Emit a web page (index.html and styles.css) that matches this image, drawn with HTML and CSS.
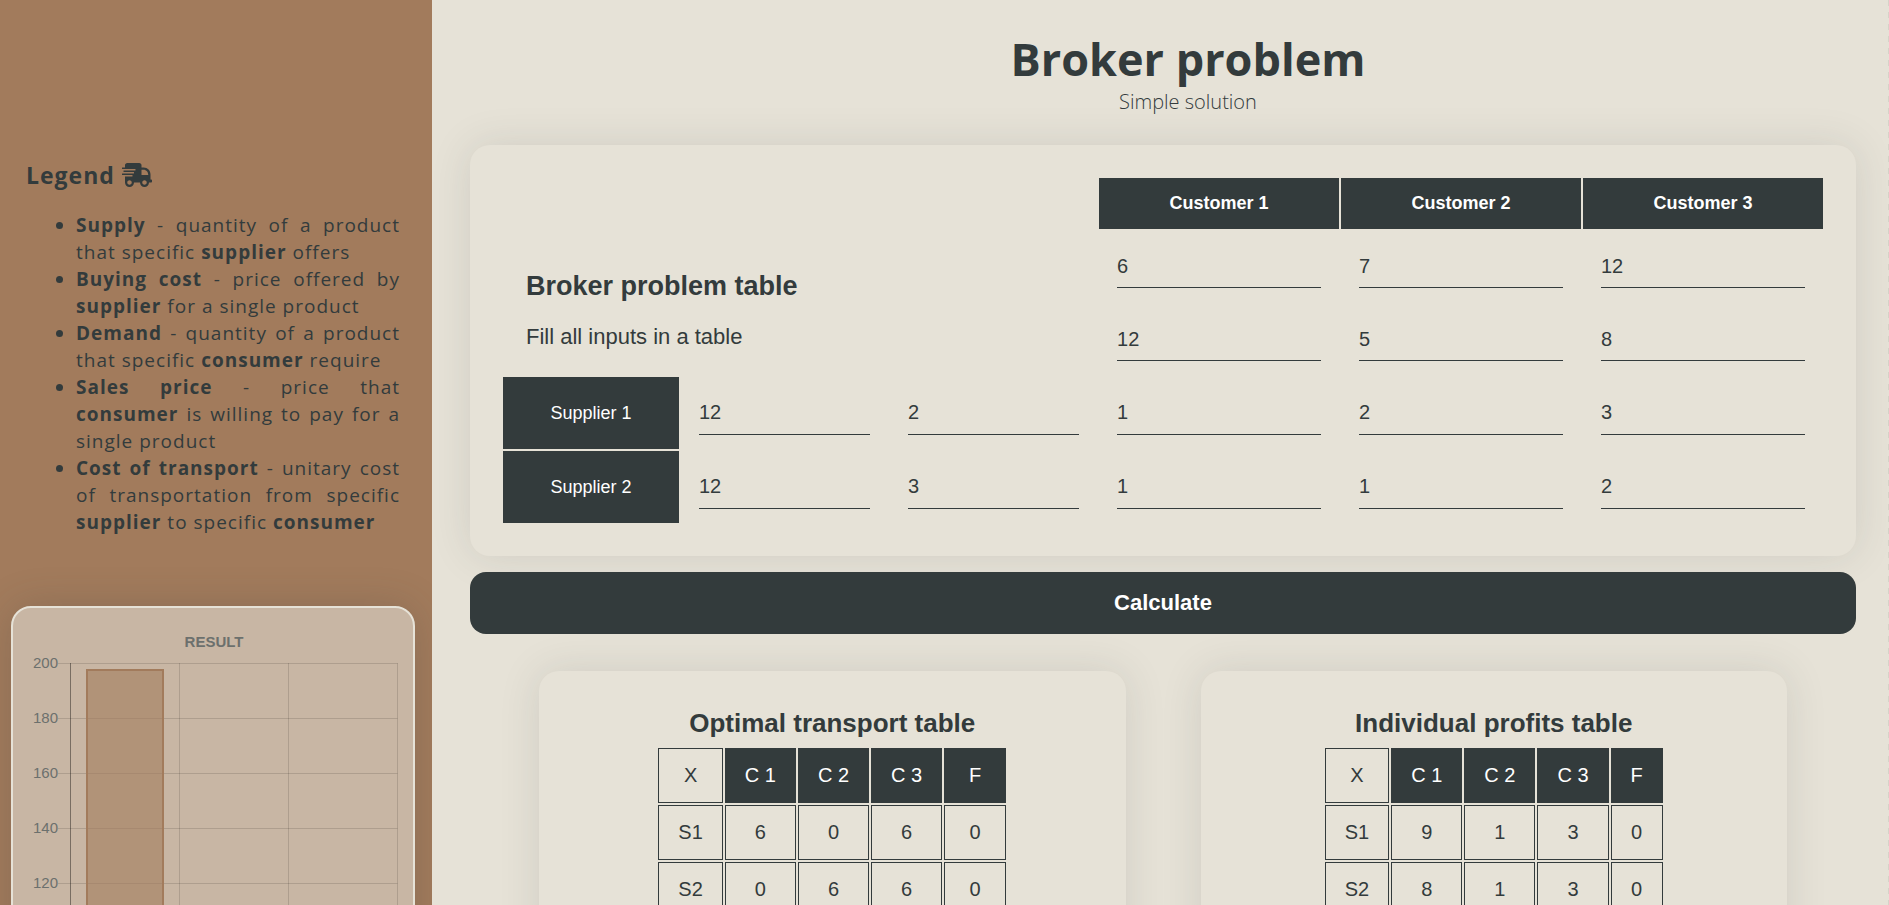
FILE: index.html
```html
<!DOCTYPE html>
<html lang="en">
<head>
<meta charset="utf-8">
<title>Broker problem</title>
<link rel="stylesheet" href="styles.css">
</head>
<body>
<aside class="sidebar">
  <section class="legend">
    <h2 class="legend-title">Legend
      <svg class="truck" viewBox="0 0 640 512" aria-hidden="true">
        <path fill="currentColor" d="M624 352h-16V243.900c0-80-60-147.900-147.900-147.900H416V48c0-26.500-21.500-48-48-48H112C85.500 0 64 21.500 64 48v48H8c-4.400 0-8 3.600-8 8v16c0 4.400 3.600 8 8 8h272c4.400 0 8 3.600 8 8v16c0 4.400-3.600 8-8 8H40c-4.400 0-8 3.600-8 8v16c0 4.400 3.600 8 8 8h208c4.400 0 8 3.600 8 8v16c0 4.400-3.600 8-8 8H8c-4.400 0-8 3.600-8 8v16c0 4.400 3.600 8 8 8h208c4.400 0 8 3.600 8 8v16c0 4.400-3.600 8-8 8H64v128c0 53 43 96 96 96s96-43 96-96h128c0 53 43 96 96 96s96-43 96-96h48c8.800 0 16-7.200 16-16v-32c0-8.800-7.200-16-16-16zM160 464c-26.500 0-48-21.500-48-48s21.500-48 48-48 48 21.500 48 48-21.500 48-48 48zm320 0c-26.500 0-48-21.500-48-48s21.500-48 48-48 48 21.500 48 48-21.500 48-48 48zm80-208H416V144h44.100c60 0 99.900 50 99.900 112z"/>
      </svg>
    </h2>
    <ul class="legend-list">
      <li><b>Supply</b> - quantity of a product that specific <b>supplier</b> offers</li>
      <li><b>Buying cost</b> - price offered by <b>supplier</b> for a single product</li>
      <li><b>Demand</b> - quantity of a product that specific <b>consumer</b> require</li>
      <li><b>Sales price</b> - price that <b>consumer</b> is willing to pay for a single product</li>
      <li><b>Cost of transport</b> - unitary cost of transportation from specific <b>supplier</b> to specific <b>consumer</b></li>
    </ul>
  </section>
  <section class="chart-card">
    <svg class="chart" viewBox="0 0 400 420" role="img" aria-label="Result chart">
      <text class="chart-title" x="201" y="39">RESULT</text>
      <g class="chart-labels">
        <text x="45" y="60">200</text>
        <text x="45" y="115">180</text>
        <text x="45" y="170">160</text>
        <text x="45" y="225">140</text>
        <text x="45" y="280">120</text>
      </g>
      <path class="grid-line" d="M45 55.500H384.500M45 110.500H384.500M45 165.500H384.500M45 220.500H384.500M45 275.500H384.500M166.500 55V420M275.500 55V420M384.500 55V420"/>
      <path class="axis-line" d="M57.500 55V420"/>
      <path class="bar" d="M74 420V62H150V420"/>
    </svg>
  </section>
</aside>
<main class="main">
  <header class="page-header">
    <h1 class="page-title">Broker problem</h1>
    <p class="page-subtitle">Simple solution</p>
  </header>
  <form class="form" onsubmit="return false">
    <div class="card">
      <table class="inputs">
        <colgroup><col class="col-supplier"><col class="col-side"><col class="col-side"><col><col><col></colgroup>
        <tr class="head-row">
          <td class="intro" colspan="3" rowspan="3">
            <h2 class="intro-title">Broker problem table</h2>
            <p class="intro-text">Fill all inputs in a table</p>
          </td>
          <th scope="col">Customer 1</th><th scope="col">Customer 2</th><th scope="col">Customer 3</th>
        </tr>
        <tr>
          <td><input aria-label="Demand 1" value="6"></td>
          <td><input aria-label="Demand 2" value="7"></td>
          <td><input aria-label="Demand 3" value="12"></td>
        </tr>
        <tr>
          <td><input aria-label="Sales price 1" value="12"></td>
          <td><input aria-label="Sales price 2" value="5"></td>
          <td><input aria-label="Sales price 3" value="8"></td>
        </tr>
        <tr>
          <th class="supplier" scope="row">Supplier 1</th>
          <td><input aria-label="Supply 1" value="12"></td>
          <td><input aria-label="Buying cost 1" value="2"></td>
          <td><input aria-label="Transport cost 1 to 1" value="1"></td>
          <td><input aria-label="Transport cost 1 to 2" value="2"></td>
          <td><input aria-label="Transport cost 1 to 3" value="3"></td>
        </tr>
        <tr>
          <th class="supplier" scope="row">Supplier 2</th>
          <td><input aria-label="Supply 2" value="12"></td>
          <td><input aria-label="Buying cost 2" value="3"></td>
          <td><input aria-label="Transport cost 2 to 1" value="1"></td>
          <td><input aria-label="Transport cost 2 to 2" value="1"></td>
          <td><input aria-label="Transport cost 2 to 3" value="2"></td>
        </tr>
      </table>
    </div>
    <button class="calculate" type="submit">Calculate</button>
  </form>
  <div class="results">
    <section class="card result-card">
      <h2 class="result-title">Optimal transport table</h2>
      <table class="result-table wide-last">
        <tr><td>X</td><th scope="col">C 1</th><th scope="col">C 2</th><th scope="col">C 3</th><th scope="col">F</th></tr>
        <tr><td>S1</td><td>6</td><td>0</td><td>6</td><td>0</td></tr>
        <tr><td>S2</td><td>0</td><td>6</td><td>6</td><td>0</td></tr>
      </table>
    </section>
    <section class="card result-card">
      <h2 class="result-title">Individual profits table</h2>
      <table class="result-table">
        <tr><td>X</td><th scope="col">C 1</th><th scope="col">C 2</th><th scope="col">C 3</th><th scope="col">F</th></tr>
        <tr><td>S1</td><td>9</td><td>1</td><td>3</td><td>0</td></tr>
        <tr><td>S2</td><td>8</td><td>1</td><td>3</td><td>0</td></tr>
      </table>
    </section>
  </div>
</main>
</body>
</html>
```
FILE: styles.css
```css
:root {
  --dark: #333b3c;
  --paper: #e6e2d7;
  --brown: #a27b5c;
}
* { box-sizing: border-box; }
body {
  margin: 0;
  height: 100vh;
  overflow: hidden;
  display: flex;
  background: var(--paper);
  color: var(--dark);
  font-family: "Liberation Sans", Arial, sans-serif;
}
h1, h2, p { margin: 0; }

.sidebar {
  flex: 0 0 432px;
  display: flex;
  flex-direction: column;
  gap: 70px;
  padding: 158px 17px 0 11px;
  overflow: hidden;
  background: var(--brown);
}
.legend {
  padding: 0 15px;
  font-family: "Open Sans", "Noto Sans", sans-serif;
  letter-spacing: 1px;
}
.legend-title {
  display: flex;
  align-items: center;
  gap: 7px;
  font-size: 23px;
  line-height: 34px;
}
.truck { width: 30px; height: 24px; }
.legend-list {
  margin: 20px 0 0;
  padding-left: 50px;
  font-size: 19px;
  line-height: 27px;
  text-align: justify;
}
.chart-card {
  flex: none;
  border: 2px solid var(--paper);
  border-radius: 20px;
  background: #c8b6a4;
  box-shadow: 0 0 40px rgba(51, 59, 60, 0.2);
}
.chart { display: block; width: 100%; }
.chart text { fill: #6c706d; font-size: 15px; }
.chart .chart-title { font-weight: bold; text-anchor: middle; }
.chart-labels { text-anchor: end; }
.grid-line { fill: none; stroke: rgba(0, 0, 0, 0.13); }
.axis-line { stroke: rgba(0, 0, 0, 0.4); }
.bar { fill: rgba(162, 123, 92, 0.6); stroke: var(--brown); stroke-width: 2; }

.main {
  flex: 1;
  min-width: 0;
  padding: 27px 33px 0 38px;
  background: repeating-linear-gradient(#d6d3c8 0 6px, transparent 6px 12px) right top / 1px 100% no-repeat;
}
.page-header { padding-left: 50px; text-align: center; font-family: "Open Sans", "Noto Sans", sans-serif; }
.page-title { font-size: 45px; line-height: 63px; }
.page-subtitle { font-size: 20px; line-height: 24px; font-weight: 300; }
.card {
  border-radius: 20px;
  background: var(--paper);
  box-shadow: 0 0 40px rgba(51, 59, 60, 0.13);
}
.form { display: grid; gap: 16px; margin-top: 31px; }
.form .card { padding: 31px; }
.inputs { width: 100%; table-layout: fixed; border-spacing: 2px; }
.col-supplier { width: 176px; }
.col-side { width: 207px; }
.inputs td { height: 71px; padding: 0 18px; }
.inputs th { background: var(--dark); color: #fff; font-size: 18px; }
.head-row th { height: 51px; }
.inputs .supplier { height: 72px; font-weight: normal; }
.inputs .intro { padding: 0 23px 25px; vertical-align: bottom; }
.intro-title { font-size: 27px; line-height: 32px; }
.intro-text { margin-top: 22px; font-size: 22px; line-height: 26px; }
.inputs input {
  display: block;
  width: 100%;
  height: 43px;
  padding: 0;
  border: 0;
  border-bottom: 1px solid var(--dark);
  background: transparent;
  color: inherit;
  font: 20px "Liberation Sans", Arial, sans-serif;
}
.calculate {
  position: relative;
  height: 62px;
  border: 0;
  border-radius: 16px;
  background: var(--dark);
  color: #fff;
  font: bold 22px "Liberation Sans", Arial, sans-serif;
}
.results {
  display: grid;
  grid-template-columns: 1fr 1fr;
  gap: 75px;
  margin-top: 37px;
  padding: 0 69px;
}
.result-card { padding: 36px 20px; }
.result-title { font-size: 26px; line-height: 32px; text-align: center; }
.result-table { margin: 7px auto 0; border-spacing: 2px; font-size: 20px; text-align: center; }
.result-table td, .result-table th {
  height: 55px;
  padding: 0 19px;
  border: 1px solid var(--dark);
  font-weight: normal;
}
.result-table th { background: var(--dark); color: #fff; }
.wide-last th:last-child { min-width: 62px; }
```
